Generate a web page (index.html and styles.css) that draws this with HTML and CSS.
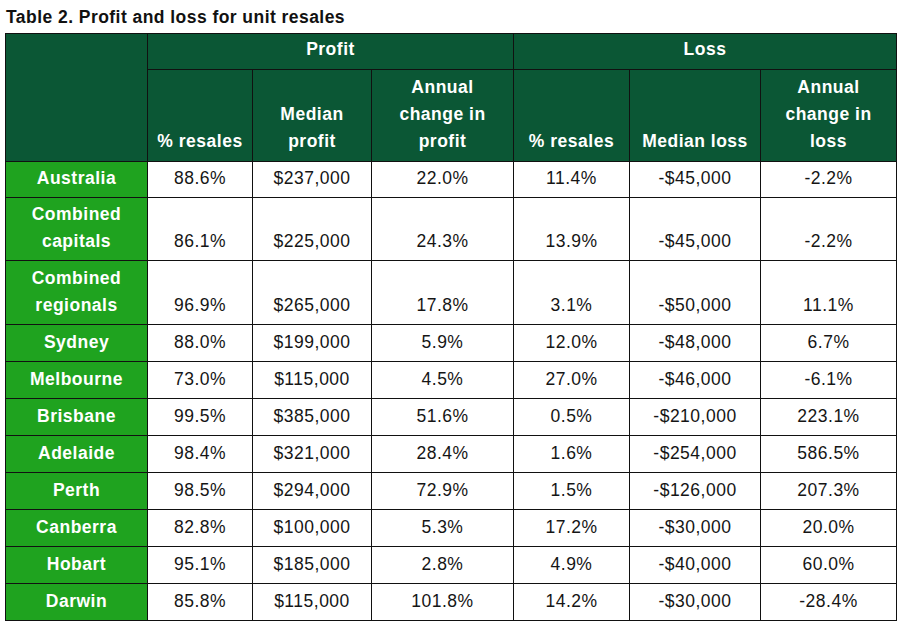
FILE: index.html
```html
<!DOCTYPE html>
<html>
<head>
<meta charset="utf-8">
<link rel="stylesheet" href="styles.css">
</head>
<body>
<h1 class="title">Table 2. Profit and loss for unit resales</h1>
<table class="pl">
  <colgroup>
    <col class="c0"><col class="c1"><col class="c2"><col class="c3"><col class="c4"><col class="c5"><col class="c6">
  </colgroup>
  <thead>
    <tr class="h1">
      <th class="blank" rowspan="2"></th>
      <th colspan="3">Profit</th>
      <th colspan="3">Loss</th>
    </tr>
    <tr class="h2">
      <th>% resales</th>
      <th>Median<br>profit</th>
      <th>Annual<br>change in<br>profit</th>
      <th>% resales</th>
      <th>Median loss</th>
      <th>Annual<br>change in<br>loss</th>
    </tr>
  </thead>
  <tbody>
    <tr class="tight"><th>Australia</th><td>88.6%</td><td>$237,000</td><td>22.0%</td><td>11.4%</td><td>-$45,000</td><td>-2.2%</td></tr>
    <tr class="tight"><th>Combined<br>capitals</th><td>86.1%</td><td>$225,000</td><td>24.3%</td><td>13.9%</td><td>-$45,000</td><td>-2.2%</td></tr>
    <tr><th>Combined<br>regionals</th><td>96.9%</td><td>$265,000</td><td>17.8%</td><td>3.1%</td><td>-$50,000</td><td>11.1%</td></tr>
    <tr><th>Sydney</th><td>88.0%</td><td>$199,000</td><td>5.9%</td><td>12.0%</td><td>-$48,000</td><td>6.7%</td></tr>
    <tr><th>Melbourne</th><td>73.0%</td><td>$115,000</td><td>4.5%</td><td>27.0%</td><td>-$46,000</td><td>-6.1%</td></tr>
    <tr><th>Brisbane</th><td>99.5%</td><td>$385,000</td><td>51.6%</td><td>0.5%</td><td>-$210,000</td><td>223.1%</td></tr>
    <tr><th>Adelaide</th><td>98.4%</td><td>$321,000</td><td>28.4%</td><td>1.6%</td><td>-$254,000</td><td>586.5%</td></tr>
    <tr><th>Perth</th><td>98.5%</td><td>$294,000</td><td>72.9%</td><td>1.5%</td><td>-$126,000</td><td>207.3%</td></tr>
    <tr><th>Canberra</th><td>82.8%</td><td>$100,000</td><td>5.3%</td><td>17.2%</td><td>-$30,000</td><td>20.0%</td></tr>
    <tr><th>Hobart</th><td>95.1%</td><td>$185,000</td><td>2.8%</td><td>4.9%</td><td>-$40,000</td><td>60.0%</td></tr>
    <tr><th>Darwin</th><td>85.8%</td><td>$115,000</td><td>101.8%</td><td>14.2%</td><td>-$30,000</td><td>-28.4%</td></tr>
  </tbody>
</table>
</body>
</html>
```

FILE: styles.css
```css
html, body {
  margin: 0;
  padding: 0;
  background: #ffffff;
}
body {
  padding: 7px 4px 0 5px;
  font-family: "Liberation Sans", Arial, sans-serif;
  color: #111;
}
.title {
  margin: 0 0 6px 1px;
  font-size: 17.5px;
  line-height: 20px;
  font-weight: bold;
  letter-spacing: 0.45px;
  color: #111;
}
.pl {
  border-collapse: collapse;
  table-layout: fixed;
  width: 891px;
  font-size: 17.5px;
  letter-spacing: 0.5px;
}
.c0 { width: 142px; }
.c1 { width: 105px; }
.c2 { width: 119px; }
.c3 { width: 142px; }
.c4 { width: 116px; }
.c5 { width: 131px; }
.c6 { width: 136px; }
.pl th, .pl td {
  border: 1px solid #111;
  padding: 4px 1px 5px;
  line-height: 27px;
  text-align: center;
  vertical-align: bottom;
  white-space: nowrap;
}
.pl thead th {
  background: #0b5735;
  color: #ffffff;
  font-weight: bold;
}
.h1 th { height: 24px; padding-top: 2px; padding-bottom: 6px; }
.h2 th { height: 81px; padding-bottom: 6px; }
.pl .tight th, .pl .tight td { padding-top: 3px; }
.pl tbody th {
  background: #1fa31f;
  color: #ffffff;
  font-weight: bold;
}
.pl td {
  background: #ffffff;
  color: #151515;
}
```
